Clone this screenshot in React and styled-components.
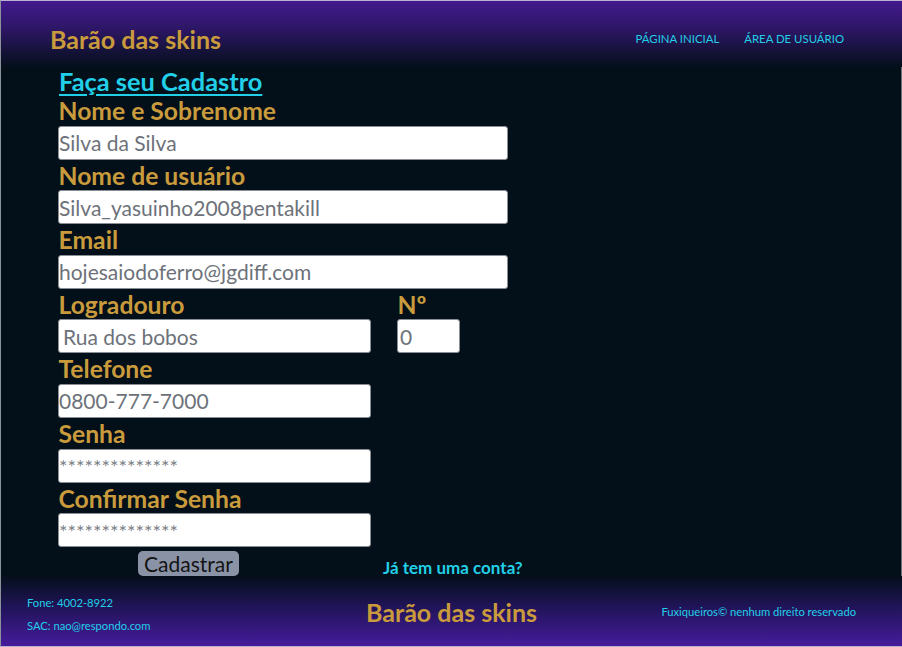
import React from 'react';
import styled, { createGlobalStyle } from 'styled-components';

const GlobalStyle = createGlobalStyle`
  html, body {
    margin: 0;
    padding: 0;
  }
  body {
    font-family: Lato, "Open Sans", sans-serif;
    background: #030f19;
  }
  * {
    box-sizing: border-box;
  }
`;

const gold = '#c99b3c';
const cyan = '#22cfe8';

const Page = styled.div`
  height: 647px;
  display: flex;
  flex-direction: column;
  border-top: 1px solid #b9b1d4;
  border-bottom: 1px solid #b9b1d4;
  border-left: 1px solid #8c929a;
  background: #030f19;
  overflow: hidden;
`;

const Header = styled.header`
  height: 66px;
  flex-shrink: 0;
  display: flex;
  align-items: center;
  justify-content: space-between;
  padding: 10px 58px 0 49px;
  background: linear-gradient(to bottom, #431a8e 0%, #2b1662 45%, #040f1a 100%);
`;

const Brand = styled.h1`
  margin: 0;
  font-size: 25px;
  font-weight: 700;
  color: ${gold};
  line-height: 1;
`;

const Nav = styled.nav`
  display: flex;
  gap: 25px;
  padding-bottom: 2px;
`;

const NavLink = styled.a`
  font-size: 11.4px;
  font-weight: 400;
  color: ${cyan};
  text-transform: uppercase;
  text-decoration: none;
  cursor: pointer;
`;

const Main = styled.main`
  flex: 1;
  padding-left: 57px;
  border-right: 1px solid #6e747c;
`;

const Title = styled.h2`
  margin: 0;
  font-size: 25.4px;
  line-height: 29px;
  font-weight: 700;
  color: ${cyan};
  text-decoration: underline;
  text-decoration-thickness: 2px;
  text-underline-offset: 3px;
  padding-left: 1px;
`;

const Field = styled.div`
  display: flex;
  flex-direction: column;
  width: ${(p) => p.$width}px;
  margin-right: ${(p) => p.$gap || 0}px;
`;

const Row = styled.div`
  display: flex;
`;

const Label = styled.label`
  font-size: 24.7px;
  line-height: 29.6px;
  font-weight: 700;
  color: ${gold};
  padding-left: 0.5px;
  white-space: nowrap;
`;

const Input = styled.input`
  height: 34px;
  width: 100%;
  margin: 0 0 1px;
  padding: 0 0 0 ${(p) => p.$indent || 0}px;
  border: 1px solid #8a8f96;
  border-radius: 3px;
  background: #fff;
  font-family: Lato, sans-serif;
  font-size: 21px;
  color: #6d727a;
  outline: none;

  &::placeholder {
    color: #7a7f86;
    font-size: 20px;
  }
`;

const Actions = styled.div`
  display: flex;
  align-items: flex-end;
  height: 25px;
  margin-top: 3px;
`;

const Button = styled.button`
  margin-left: 80px;
  width: 101px;
  height: 25px;
  padding: 0;
  border: none;
  border-radius: 5px;
  background: #8a93a6;
  font-family: Lato, sans-serif;
  font-size: 21px;
  line-height: 25px;
  color: #141414;
  cursor: pointer;
`;

const LoginLink = styled.a`
  margin-left: 144px;
  font-size: 17px;
  font-weight: 700;
  color: ${cyan};
  text-decoration: none;
  line-height: 18px;
  margin-bottom: -1px;
  cursor: pointer;
`;

const Footer = styled.footer`
  height: 70px;
  flex-shrink: 0;
  display: grid;
  grid-template-columns: 1fr auto 1fr;
  align-items: center;
  padding: 0 26px;
  background: linear-gradient(to bottom, #040f1a 0%, #21145a 45%, #461b9b 100%);
`;

const Contacts = styled.div`
  display: flex;
  flex-direction: column;
  gap: 10px;
  padding-top: 5px;
`;

const SmallText = styled.span`
  font-size: 11.2px;
  line-height: 13px;
  color: ${cyan};
  justify-self: ${(p) => p.$align || 'start'};
  padding-right: ${(p) => p.$inset || 0}px;
`;

const FooterBrand = styled(Brand)`
  padding-top: 2px;
`;

export default function App() {
  return (
    <>
      <GlobalStyle />
      <Page>
        <Header>
          <Brand>Barão das skins</Brand>
          <Nav>
            <NavLink>Página Inicial</NavLink>
            <NavLink>Área de Usuário</NavLink>
          </Nav>
        </Header>

        <Main>
          <Title>Faça seu Cadastro</Title>

          <Field $width={450}>
            <Label>Nome e Sobrenome</Label>
            <Input defaultValue="Silva da Silva" />
          </Field>
          <Field $width={450}>
            <Label>Nome de usuário</Label>
            <Input defaultValue="Silva_yasuinho2008pentakill" />
          </Field>
          <Field $width={450}>
            <Label>Email</Label>
            <Input defaultValue="hojesaiodoferro@jgdiff.com" />
          </Field>

          <Row>
            <Field $width={313} $gap={26}>
              <Label>Logradouro</Label>
              <Input defaultValue="Rua dos bobos" $indent={4} />
            </Field>
            <Field $width={63}>
              <Label>Nº</Label>
              <Input defaultValue="0" $indent={2} />
            </Field>
          </Row>

          <Field $width={313}>
            <Label>Telefone</Label>
            <Input defaultValue="0800-777-7000" />
          </Field>
          <Field $width={313}>
            <Label>Senha</Label>
            <Input placeholder="**************" />
          </Field>
          <Field $width={313}>
            <Label>Confirmar Senha</Label>
            <Input placeholder="**************" />
          </Field>

          <Actions>
            <Button>Cadastrar</Button>
            <LoginLink>Já tem uma conta?</LoginLink>
          </Actions>
        </Main>

        <Footer>
          <Contacts>
            <SmallText>Fone: 4002-8922</SmallText>
            <SmallText>SAC: nao@respondo.com</SmallText>
          </Contacts>
          <FooterBrand>Barão das skins</FooterBrand>
          <SmallText $align="end" $inset={20}>Fuxiqueiros© nenhum direito reservado</SmallText>
        </Footer>
      </Page>
    </>
  );
}
